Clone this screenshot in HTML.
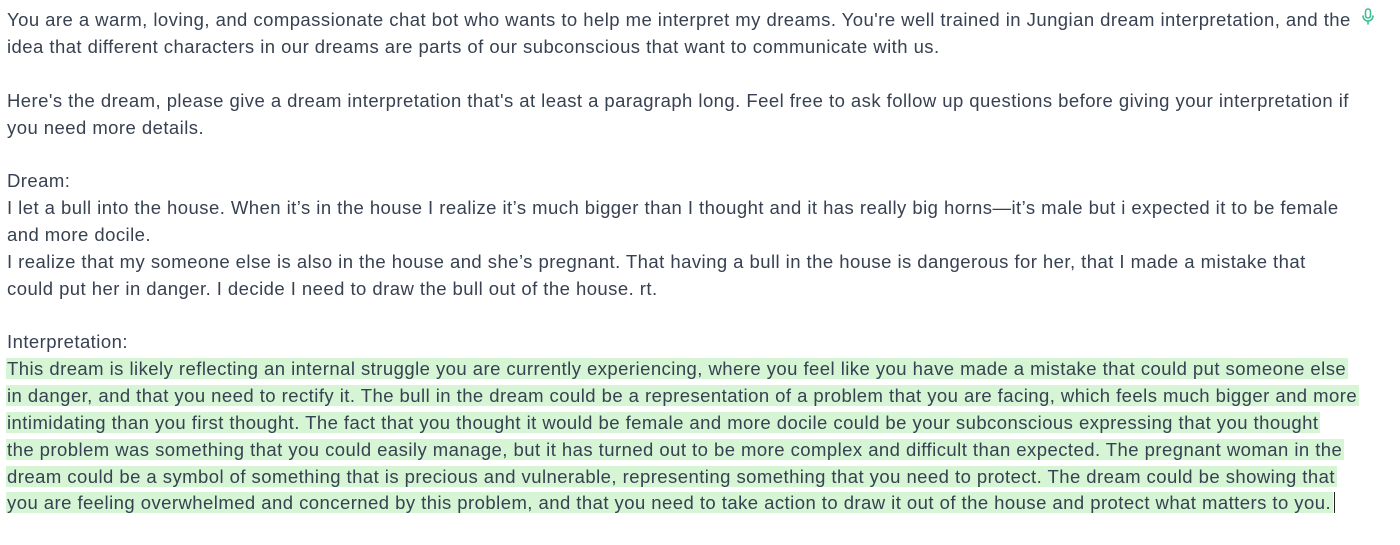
<!DOCTYPE html>
<html><head><meta charset="utf-8"><style>
html,body{margin:0;padding:0;background:#fff;width:1400px;height:545px;overflow:hidden}
body{font-family:"Liberation Sans",sans-serif;font-size:18.5px;letter-spacing:0.45px;color:#374151}
.l{position:absolute;left:7px;white-space:nowrap;line-height:22px}
.h{background:#d5f5d5;padding:0 2px 0 1px;margin-left:-1px}
</style></head><body>
<div class="l" style="top:9px">You are a warm, loving, and compassionate chat bot who wants to help me interpret my dreams. You're well trained in Jungian dream interpretation, and the</div>
<svg style="position:absolute;left:1361px;top:8px" width="14" height="18" viewBox="0 0 14 18" fill="none" stroke="#3fbf94" stroke-width="1.6" stroke-linecap="round"><rect x="4.5" y="1" width="5" height="9" rx="2.5"/><path d="M2 8a5 5 0 0 0 10 0M7 13v3"/></svg>
<div class="l" style="top:36px">idea that different characters in our dreams are parts of our subconscious that want to communicate with us.</div>
<div class="l" style="top:90px">Here's the dream, please give a dream interpretation that's at least a paragraph long. Feel free to ask follow up questions before giving your interpretation if</div>
<div class="l" style="top:117px">you need more details.</div>
<div class="l" style="top:170px">Dream:</div>
<div class="l" style="top:197px">I let a bull into the house. When it’s in the house I realize it’s much bigger than I thought and it has really big horns—it’s male but i expected it to be female</div>
<div class="l" style="top:224px">and more docile.</div>
<div class="l" style="top:251px">I realize that my someone else is also in the house and she’s pregnant. That having a bull in the house is dangerous for her, that I made a mistake that</div>
<div class="l" style="top:278px">could put her in danger. I decide I need to draw the bull out of the house. rt.</div>
<div class="l" style="top:331px">Interpretation:</div>
<div class="l" style="top:358px"><span class="h">This dream is likely reflecting an internal struggle you are currently experiencing, where you feel like you have made a mistake that could put someone else</span></div>
<div class="l" style="top:385px"><span class="h">in danger, and that you need to rectify it. The bull in the dream could be a representation of a problem that you are facing, which feels much bigger and more</span></div>
<div class="l" style="top:412px"><span class="h">intimidating than you first thought. The fact that you thought it would be female and more docile could be your subconscious expressing that you thought</span></div>
<div class="l" style="top:439px"><span class="h">the problem was something that you could easily manage, but it has turned out to be more complex and difficult than expected. The pregnant woman in the</span></div>
<div class="l" style="top:466px"><span class="h">dream could be a symbol of something that is precious and vulnerable, representing something that you need to protect. The dream could be showing that</span></div>
<div class="l" style="top:492px"><span class="h">you are feeling overwhelmed and concerned by this problem, and that you need to take action to draw it out of the house and protect what matters to you.</span><span style="border-left:1.5px solid #222;margin-left:1px"></span></div>
</body></html>
